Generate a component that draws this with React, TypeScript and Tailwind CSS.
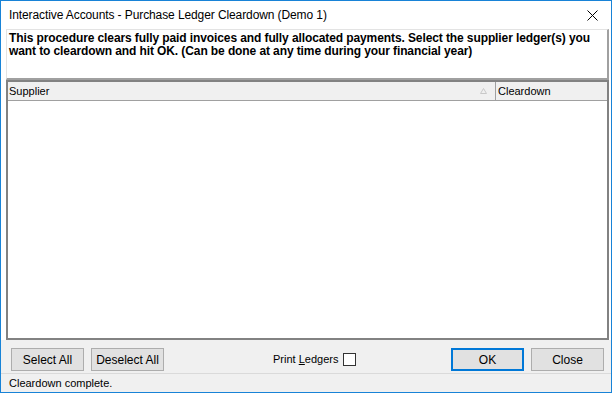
export default function App() {
  return (
    <div className="h-[399px] w-[615px] bg-white" style={{ fontFamily: '"Liberation Sans", Arial, sans-serif' }}>
      <div className="flex h-[393px] w-[612px] flex-col border border-[#1883d7] bg-[#f0f0f0]">
        {/* title bar */}
        <div className="flex h-[28px] shrink-0 items-center justify-between bg-white pl-[8px] pr-[13px]">
          <span className="text-[12px] tracking-[-0.1px] text-black">Interactive Accounts - Purchase Ledger Cleardown (Demo 1)</span>
          <svg width="11" height="11" viewBox="0 0 11 11">
            <path d="M0.5 0.5 L10.5 10.5 M10.5 0.5 L0.5 10.5" stroke="#000" strokeWidth="1" />
          </svg>
        </div>

        <div className="flex flex-1 flex-col bg-white pl-[5px] pr-[2px]">
          {/* description */}
          <div className="h-[51px] shrink-0 border-b-2 border-r-2 border-l border-t border-b-[#a0a0a0] border-r-[#a0a0a0] border-l-[#e3e3e3] border-t-[#e3e3e3] bg-white px-[2px] pt-[2px] text-[12px] font-bold leading-[13px] tracking-[-0.1px] text-black">
            This procedure clears fully paid invoices and fully allocated payments. Select the supplier ledger(s) you
            <br />
            want to cleardown and hit OK. (Can be done at any time during your financial year)
          </div>

          {/* grid */}
          <div className="flex flex-1 flex-col border-2 border-[#828282] bg-white">
            <div className="flex h-[19px] shrink-0 border-b border-[#a0a0a0] bg-[#f0f0f0] text-[11px] text-black">
              <div className="flex flex-1 items-center justify-between border-r border-[#a0a0a0] pl-[1px] pr-[8px]">
                <span>Supplier</span>
                <svg width="7" height="6" viewBox="0 0 7 6">
                  <path d="M0.5 5.5 L3.5 0.5 L6.5 5.5 Z" fill="none" stroke="#c8c8c8" strokeWidth="1" />
                </svg>
              </div>
              <div className="flex w-[111px] items-center pl-[2px]">Cleardown</div>
            </div>
            <div className="flex-1" />
          </div>
        </div>

        {/* buttons */}
        <div className="flex h-[33px] shrink-0 items-center pl-[10px] pr-[7px] pt-[6px] text-[12px] text-black">
          <button className="h-[23px] w-[73px] border border-[#adadad] bg-[#e1e1e1]">Select All</button>
          <button className="ml-[7px] h-[23px] w-[73px] border border-[#adadad] bg-[#e1e1e1]">Deselect All</button>
          <div className="ml-[109px] flex items-center text-[11px]">
            <span>
              Print <span className="underline">L</span>edgers
            </span>
            <span className="ml-[5px] inline-block h-[13px] w-[13px] border border-[#333] bg-white" />
          </div>
          <button className="ml-auto h-[23px] w-[73px] border-2 border-[#0078d7] bg-[#e1e1e1]">OK</button>
          <button className="ml-[7px] h-[23px] w-[73px] border border-[#adadad] bg-[#e1e1e1]">Close</button>
        </div>

        {/* status bar */}
        <div className="flex h-[19px] shrink-0 items-center border-t border-[#dadada] pl-[8px] text-[11px] text-black">
          Cleardown complete.
        </div>
      </div>
    </div>
  );
}
